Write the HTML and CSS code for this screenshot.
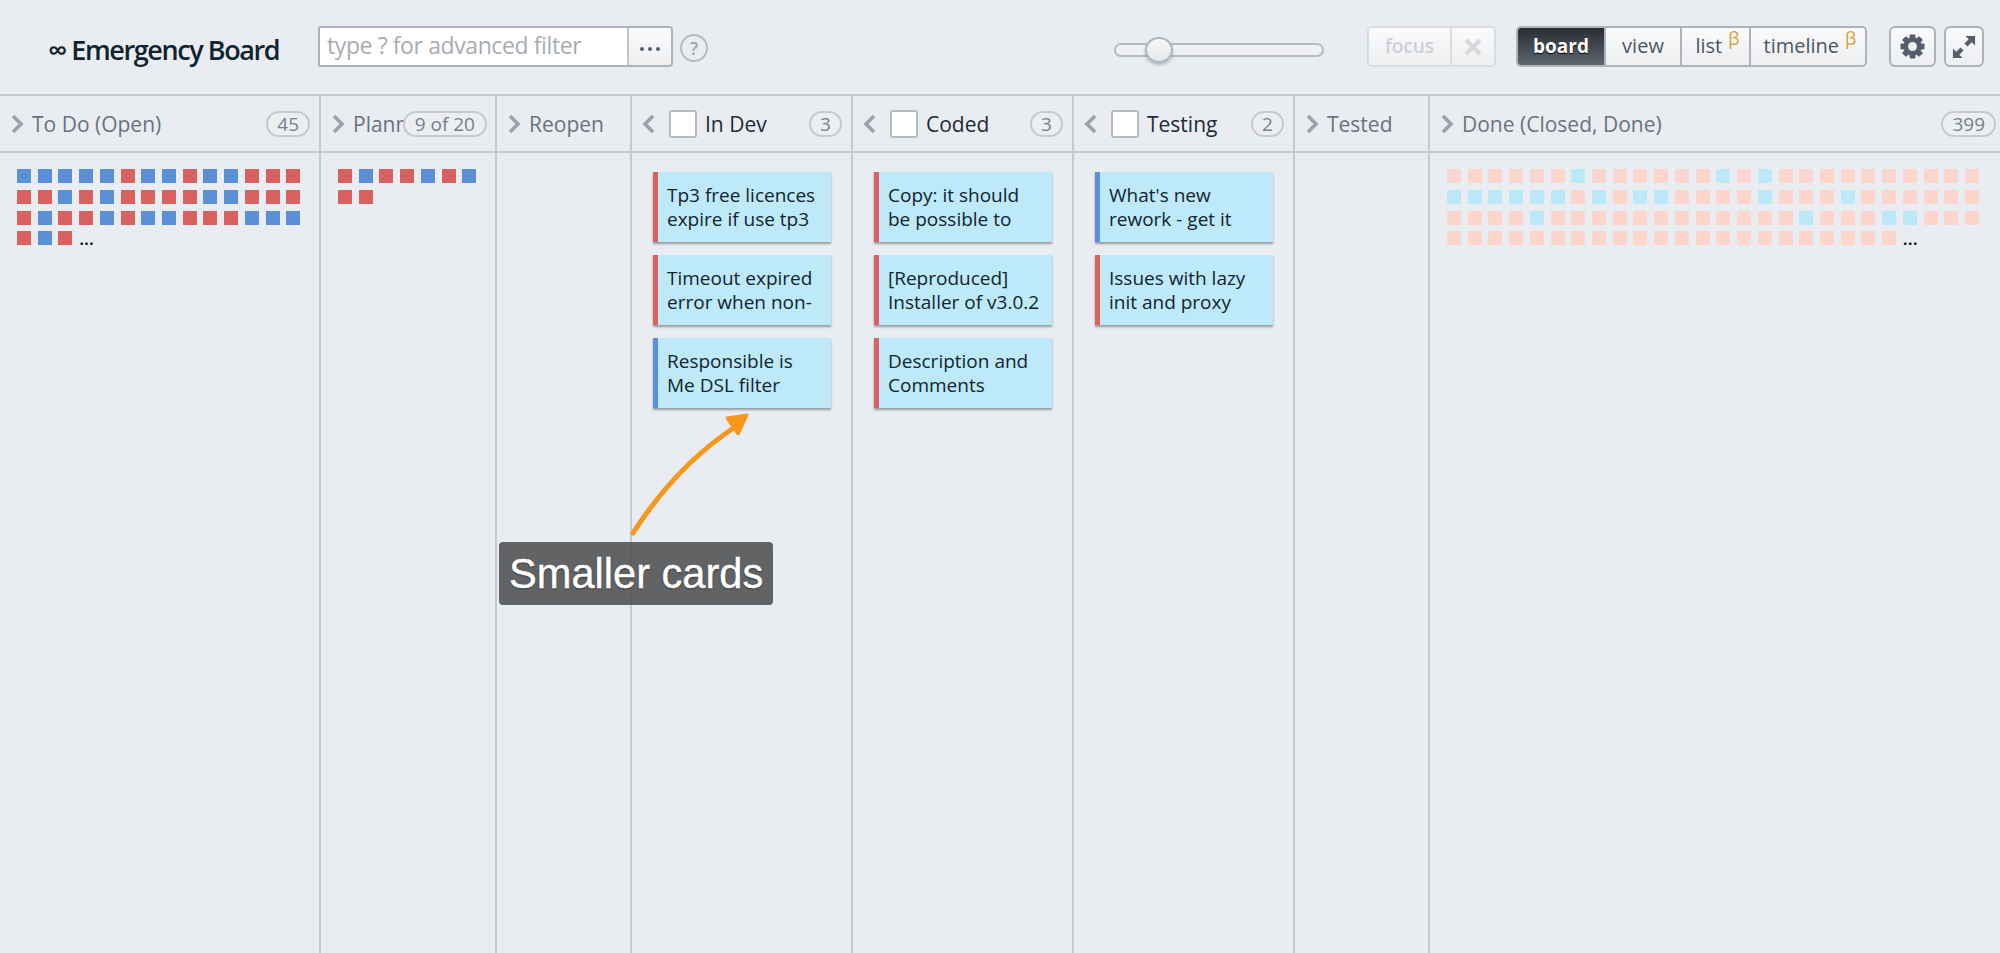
FILE: index.html
```html
<!DOCTYPE html>
<html lang="en">
<head>
<meta charset="utf-8">
<title>Emergency Board</title>
<link rel="stylesheet" href="styles.css">
</head>
<body>
<header class="topbar">
  <h1 class="title">∞ Emergency Board</h1>
  <div class="filter">
    <div class="filter-input">type ? for advanced filter</div>
    <div class="filter-more"><i></i><i></i><i></i></div>
  </div>
  <div class="help">?</div>
  <div class="tools">
    <div class="slider"><div class="knob"></div></div>
    <div class="btn-group focus">
      <div class="btn focus-label">focus</div>
      <div class="btn focus-x">
        <svg width="20" height="20" viewBox="0 0 20 20"><path d="M3 3 17 17M17 3 3 17" stroke="#d6d8dc" stroke-width="4" fill="none"/></svg>
      </div>
    </div>
    <div class="btn-group views">
      <div class="btn v-board">board</div>
      <div class="btn v-view">view</div>
      <div class="btn v-list">list<sup class="beta">β</sup></div>
      <div class="btn v-timeline">timeline<sup class="beta">β</sup></div>
    </div>
    <div class="icon-btn gear">
      <svg width="25" height="25" viewBox="0 0 26 26"><g fill="#565e6e"><rect x="10" y="0.5" width="6" height="25" rx="1"/><rect x="10" y="0.5" width="6" height="25" rx="1" transform="rotate(45 13 13)"/><rect x="10" y="0.5" width="6" height="25" rx="1" transform="rotate(90 13 13)"/><rect x="10" y="0.5" width="6" height="25" rx="1" transform="rotate(135 13 13)"/><circle cx="13" cy="13" r="9.5"/></g><circle cx="13" cy="13" r="4.6" fill="#f1f2f4"/></svg>
    </div>
    <div class="icon-btn expand">
      <svg width="24" height="24" viewBox="0 0 26 26" fill="#565e6e"><path d="M14.5 1H25V11.5L21.4 7.9 16.8 12.5 13.5 9.2 18.1 4.6Z"/><path d="M11.5 25H1V14.5L4.6 18.1 9.2 13.5 12.5 16.8 7.9 21.4Z"/></svg>
    </div>
  </div>
</header>

<main class="board">
  <section class="col col-todo">
    <div class="col-head">
      <svg class="chev" width="14" height="18" viewBox="0 0 14 18"><path d="M3 1 11 9 3 17" fill="none" stroke="#9aa2ae" stroke-width="3.6"/></svg>
      <span class="col-name">To Do (Open)</span>
      <span class="count">45</span>
    </div>
    <div class="minis">
      <b class="b"></b><b class="b"></b><b class="b"></b><b class="b"></b><b class="b"></b><b class="r"></b><b class="b"></b><b class="b"></b><b class="r"></b><b class="b"></b><b class="b"></b><b class="r"></b><b class="r"></b><b class="r"></b>
      <b class="r"></b><b class="r"></b><b class="b"></b><b class="r"></b><b class="b"></b><b class="r"></b><b class="r"></b><b class="r"></b><b class="r"></b><b class="b"></b><b class="b"></b><b class="r"></b><b class="r"></b><b class="r"></b>
      <b class="r"></b><b class="b"></b><b class="r"></b><b class="r"></b><b class="b"></b><b class="r"></b><b class="b"></b><b class="b"></b><b class="r"></b><b class="r"></b><b class="r"></b><b class="b"></b><b class="b"></b><b class="b"></b>
      <b class="r"></b><b class="b"></b><b class="r"></b><span class="more">...</span>
    </div>
  </section>

  <section class="col col-plan">
    <div class="col-head">
      <svg class="chev" width="14" height="18" viewBox="0 0 14 18"><path d="M3 1 11 9 3 17" fill="none" stroke="#9aa2ae" stroke-width="3.6"/></svg>
      <span class="col-name">Planned</span>
      <span class="count over">9 of 20</span>
    </div>
    <div class="minis">
      <b class="r"></b><b class="b"></b><b class="r"></b><b class="r"></b><b class="b"></b><b class="r"></b><b class="b"></b>
      <b class="r"></b><b class="r"></b>
    </div>
  </section>

  <section class="col col-narrow">
    <div class="col-head">
      <svg class="chev" width="14" height="18" viewBox="0 0 14 18"><path d="M3 1 11 9 3 17" fill="none" stroke="#9aa2ae" stroke-width="3.6"/></svg>
      <span class="col-name">Reopen</span>
    </div>
  </section>

  <section class="col col-open">
    <div class="col-head">
      <svg class="chev chev-open" width="14" height="18" viewBox="0 0 14 18"><path d="M11 1 3 9 11 17" fill="none" stroke="#9aa2ae" stroke-width="3.6"/></svg>
      <span class="check"></span>
      <span class="col-name dark">In Dev</span>
      <span class="count">3</span>
    </div>
    <div class="cards">
      <article class="card bug">Tp3 free licences expire if use tp3</article>
      <article class="card bug">Timeout expired error when non-</article>
      <article class="card story">Responsible is Me DSL filter</article>
    </div>
  </section>

  <section class="col col-open">
    <div class="col-head">
      <svg class="chev chev-open" width="14" height="18" viewBox="0 0 14 18"><path d="M11 1 3 9 11 17" fill="none" stroke="#9aa2ae" stroke-width="3.6"/></svg>
      <span class="check"></span>
      <span class="col-name dark">Coded</span>
      <span class="count">3</span>
    </div>
    <div class="cards">
      <article class="card bug">Copy: it should be possible to</article>
      <article class="card bug">[Reproduced] Installer of v3.0.2</article>
      <article class="card bug">Description and Comments</article>
    </div>
  </section>

  <section class="col col-open">
    <div class="col-head">
      <svg class="chev chev-open" width="14" height="18" viewBox="0 0 14 18"><path d="M11 1 3 9 11 17" fill="none" stroke="#9aa2ae" stroke-width="3.6"/></svg>
      <span class="check"></span>
      <span class="col-name dark">Testing</span>
      <span class="count">2</span>
    </div>
    <div class="cards">
      <article class="card story">What's new rework - get it</article>
      <article class="card bug">Issues with lazy init and proxy</article>
    </div>
  </section>

  <section class="col col-narrow">
    <div class="col-head">
      <svg class="chev" width="14" height="18" viewBox="0 0 14 18"><path d="M3 1 11 9 3 17" fill="none" stroke="#9aa2ae" stroke-width="3.6"/></svg>
      <span class="col-name">Tested</span>
    </div>
  </section>

  <section class="col col-done">
    <div class="col-head">
      <svg class="chev" width="14" height="18" viewBox="0 0 14 18"><path d="M3 1 11 9 3 17" fill="none" stroke="#9aa2ae" stroke-width="3.6"/></svg>
      <span class="col-name">Done (Closed, Done)</span>
      <span class="count">399</span>
    </div>
    <div class="minis">
      <b class="p"></b><b class="p"></b><b class="p"></b><b class="p"></b><b class="p"></b><b class="p"></b><b class="c"></b><b class="p"></b><b class="p"></b><b class="p"></b><b class="p"></b><b class="p"></b><b class="p"></b><b class="c"></b><b class="p"></b><b class="c"></b><b class="p"></b><b class="p"></b><b class="p"></b><b class="p"></b><b class="p"></b><b class="p"></b><b class="p"></b><b class="p"></b><b class="p"></b><b class="p"></b>
      <b class="c"></b><b class="c"></b><b class="c"></b><b class="c"></b><b class="c"></b><b class="c"></b><b class="p"></b><b class="c"></b><b class="p"></b><b class="c"></b><b class="c"></b><b class="p"></b><b class="p"></b><b class="p"></b><b class="p"></b><b class="c"></b><b class="p"></b><b class="p"></b><b class="p"></b><b class="c"></b><b class="p"></b><b class="p"></b><b class="p"></b><b class="p"></b><b class="p"></b><b class="p"></b>
      <b class="p"></b><b class="p"></b><b class="p"></b><b class="p"></b><b class="c"></b><b class="p"></b><b class="p"></b><b class="p"></b><b class="p"></b><b class="p"></b><b class="p"></b><b class="p"></b><b class="p"></b><b class="p"></b><b class="p"></b><b class="p"></b><b class="p"></b><b class="c"></b><b class="p"></b><b class="p"></b><b class="p"></b><b class="c"></b><b class="c"></b><b class="p"></b><b class="p"></b><b class="p"></b>
      <b class="p"></b><b class="p"></b><b class="p"></b><b class="p"></b><b class="p"></b><b class="p"></b><b class="p"></b><b class="p"></b><b class="p"></b><b class="p"></b><b class="p"></b><b class="p"></b><b class="p"></b><b class="p"></b><b class="p"></b><b class="p"></b><b class="p"></b><b class="p"></b><b class="p"></b><b class="p"></b><b class="p"></b><b class="p"></b><span class="more">...</span>
    </div>
  </section>
</main>

<svg class="arrow" width="140" height="140" viewBox="0 0 140 140">
  <path d="M13 128Q56 61 115 22" fill="none" stroke="#f7981d" stroke-width="5" stroke-linecap="round"/>
  <path d="M107 13 127 10 118 29Z" fill="#f7981d" stroke="#f7981d" stroke-width="3" stroke-linejoin="round"/>
</svg>
<div class="callout">Smaller cards</div>
</body>
</html>
```
FILE: styles.css
```css
* { box-sizing: border-box; }

html, body { height: 100%; }

body {
  margin: 0;
  background: #e9ecf1;
  font-family: "Open Sans", "Liberation Sans", sans-serif;
  overflow: hidden;
  display: flex;
  flex-direction: column;
}

/* top bar */
.topbar {
  flex: none;
  height: 96px;
  display: flex;
  align-items: flex-start;
  padding: 26px 16px 0 48px;
  border-bottom: 2px solid #c6cad0;
}

.title {
  margin: 6px 0 0;
  width: 270px;
  font-size: 27px;
  line-height: 36px;
  font-weight: 600;
  letter-spacing: -1.4px;
  color: #10242f;
  white-space: nowrap;
}

.filter {
  display: flex;
  width: 355px;
  height: 41px;
  border: 2px solid #aeb3ba;
  border-radius: 2px 4px 4px 2px;
  overflow: hidden;
}

.filter-input {
  flex: 1;
  padding-left: 7px;
  background: #fff;
  color: #a8acb2;
  font-size: 23px;
  letter-spacing: -.4px;
  line-height: 35px;
}

.filter-more {
  width: 44px;
  display: flex;
  align-items: center;
  justify-content: center;
  gap: 4px;
  padding-top: 4px;
  border-left: 2px solid #c1c5cb;
  background: linear-gradient(#fbfbfc, #eceef0);
}

.filter-more i {
  width: 4px;
  height: 4px;
  border-radius: 50%;
  background: #565e6e;
}

.help {
  margin: 8px 0 0 7px;
  width: 28px;
  height: 28px;
  border: 2px solid #b6bbc2;
  border-radius: 50%;
  color: #a3a8af;
  font-size: 18px;
  font-weight: 600;
  line-height: 24px;
  text-align: center;
}

.tools {
  margin-left: auto;
  display: flex;
  align-items: flex-start;
}

.slider {
  position: relative;
  margin: 17px 43px 0 0;
  width: 210px;
  height: 14px;
  border: 2px solid #b6bbc2;
  border-radius: 7px;
  background: #eff1f3;
}

.knob {
  position: absolute;
  left: 29px;
  top: -8px;
  width: 28px;
  height: 26px;
  border: 2px solid #b0b5bc;
  border-radius: 50%;
  background: linear-gradient(#f6f7f8, #e6e8eb);
  box-shadow: 0 2px 3px rgba(60, 70, 80, .3);
}

.btn-group {
  display: flex;
  height: 41px;
  border: 2px solid #aeb3ba;
  border-radius: 5px;
  overflow: hidden;
}

.btn {
  display: flex;
  align-items: center;
  justify-content: center;
  height: 100%;
  padding-bottom: 2px;
  font-size: 20px;
  color: #4d5563;
  background: linear-gradient(#fbfbfc, #eceef0);
  border-left: 2px solid #aeb3ba;
}

.btn:first-child { border-left: 0; }

.focus {
  width: 129px;
  margin-right: 20px;
  border-color: #d9dce0;
}

.focus-label {
  width: 81px;
  color: #cdd0d4;
  font-size: 19px;
  font-weight: 600;
}

.focus-x {
  flex: 1;
  padding-bottom: 0;
  border-left-color: #d9dce0;
}

.views { width: 351px; margin-right: 22px; }

.v-board {
  width: 86px;
  color: #fff;
  font-size: 19px;
  font-weight: 700;
  text-shadow: 0 1px 1px #000;
  background: linear-gradient(#2a2d32, #5e6570);
  border-color: #3c4047;
}

.v-view { width: 76px; }
.v-list { width: 69px; padding-left: 4px; }
.v-timeline { flex: 1; padding-left: 4px; }

.btn .beta {
  align-self: flex-start;
  margin: 0 0 0 6px;
  color: #e09a35;
  font-size: 18px;
  line-height: 20px;
}

.icon-btn {
  display: flex;
  align-items: center;
  justify-content: center;
  height: 41px;
  border: 2px solid #aeb3ba;
  border-radius: 6px;
  background: linear-gradient(#fbfbfc, #eceef0);
}

.gear { width: 47px; margin-right: 8px; }
.expand { width: 40px; }

/* board */
.board {
  flex: 1;
  display: flex;
  min-height: 0;
}

.col {
  flex: none;
  border-right: 2px solid #c6cad0;
}

.col-todo { width: 321px; }
.col-plan { width: 176px; }
.col-narrow { width: 135px; }
.col-open { width: 221px; }
.col-done { flex: 1; border-right: 0; }

.col-head {
  position: relative;
  display: flex;
  align-items: center;
  height: 57px;
  padding-left: 10px;
  border-bottom: 2px solid #c6cad0;
  white-space: nowrap;
}

.chev { flex: none; margin-right: 8px; }
.chev-open { margin-right: 13px; }

.col-name {
  font-size: 21px;
  color: #6a727e;
}

.col-name.dark { color: #1d2b36; margin-left: 8px; }

.check {
  flex: none;
  width: 28px;
  height: 28px;
  background: #fff;
  border: 2px solid #b6bbc2;
  border-radius: 3px;
}

.count {
  position: absolute;
  right: 9px;
  top: 15px;
  min-width: 33px;
  height: 26px;
  padding: 0 9px;
  border: 2px solid #c6cad0;
  border-radius: 13px;
  background: #eceef2;
  color: #79808a;
  font-size: 19px;
  line-height: 22px;
  text-align: center;
}

.count.over { right: 8px; padding: 0 10px; }

.col-done .count { right: 4px; }

.minis {
  display: flex;
  flex-wrap: wrap;
  gap: 6.8px 6.72px;
  padding: 16px 17px 0;
}

.minis b {
  display: block;
  width: 14px;
  height: 14px;
}

.minis .r { background: #d9615f; }
.minis .b { background: #5b8fd6; }
.minis .p { background: #fcd5cc; }
.minis .c { background: #bce9f8; }

.more {
  height: 14px;
  color: #111;
  font-size: 18px;
  line-height: 14px;
  font-weight: 600;
}

.cards {
  display: flex;
  flex-direction: column;
  gap: 13px;
  padding: 19px 0 0 21px;
}

.card {
  width: 178px;
  height: 70px;
  padding: 11px 8px 0 9px;
  overflow: hidden;
  background: #bde9f9;
  border-left: 5px solid;
  box-shadow: 0 2px 2px rgba(50, 60, 70, .45);
  color: #10242f;
  font-size: 19px;
  line-height: 24px;
}

.card.bug { border-left-color: #d9615f; }
.card.story { border-left-color: #5b8fd6; }

/* annotation */
.arrow {
  position: absolute;
  left: 620px;
  top: 405px;
}

.callout {
  position: absolute;
  left: 499px;
  top: 542px;
  width: 274px;
  height: 63px;
  padding-left: 10px;
  border-radius: 4px;
  background: rgba(75, 76, 78, .86);
  color: #fff;
  font-family: "Liberation Sans", Arial, sans-serif;
  font-size: 41.6px;
  line-height: 63px;
  white-space: nowrap;
  -webkit-text-stroke: .4px #fff;
  text-shadow: 0 1px 2px rgba(0, 0, 0, .5);
}
```
